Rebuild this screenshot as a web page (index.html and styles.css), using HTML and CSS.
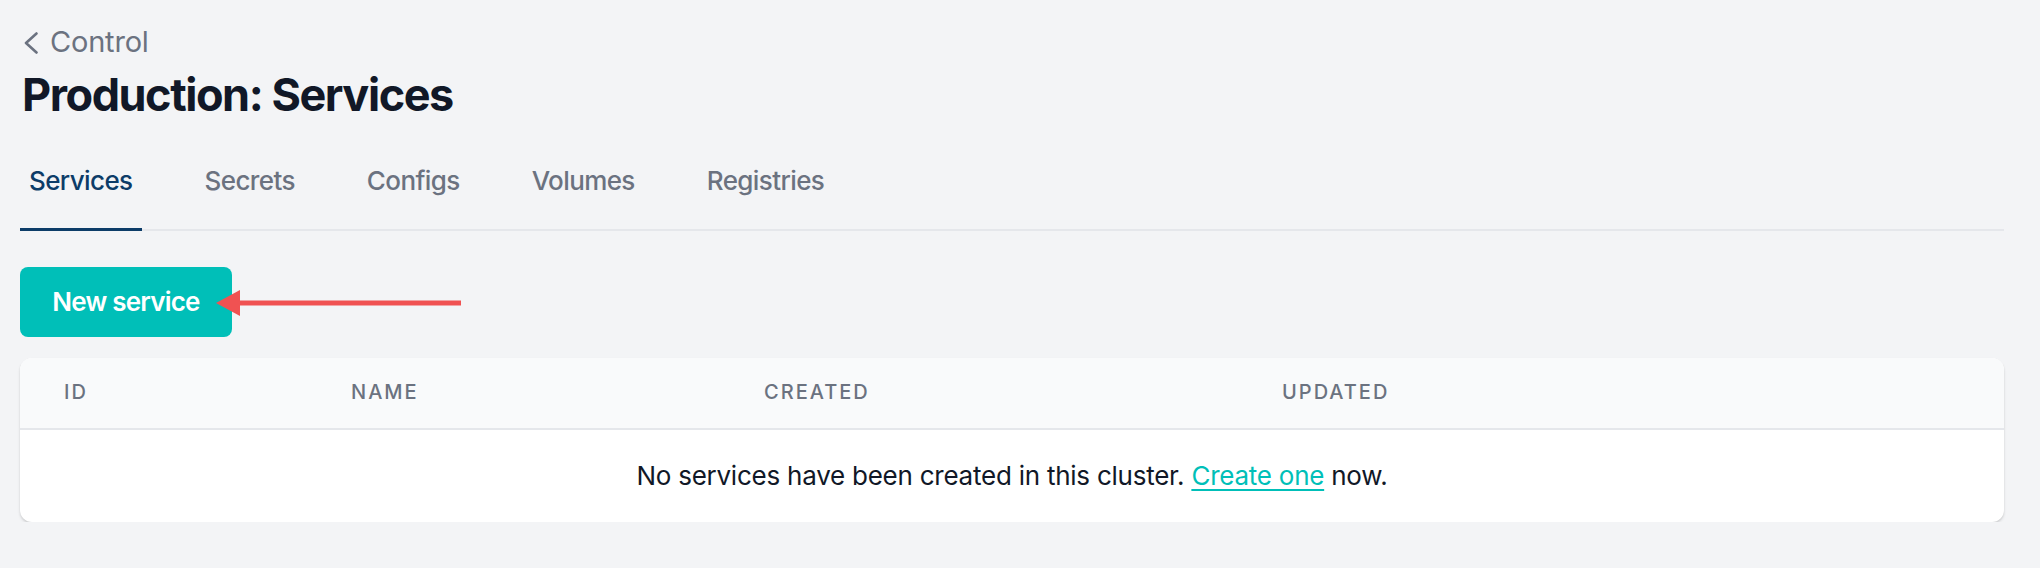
FILE: index.html
```html
<!DOCTYPE html>
<html lang="en">
<head>
<meta charset="utf-8">
<title>Production: Services</title>
<link rel="stylesheet" href="styles.css">
</head>
<body>
<div class="page">
  <a class="back" href="#">
    <svg class="chev" width="16" height="22" viewBox="0 0 16 22"><path d="M13.5 1.5 L3 11 L13.5 20.5" fill="none" stroke="#6b7280" stroke-width="2.6" stroke-linecap="round" stroke-linejoin="round"/></svg>
    <span>Control</span>
  </a>
  <h1 class="title">Production: Services</h1>
  <nav class="tabs">
    <a class="tab active" href="#">Services</a>
    <a class="tab" href="#">Secrets</a>
    <a class="tab" href="#">Configs</a>
    <a class="tab" href="#">Volumes</a>
    <a class="tab" href="#">Registries</a>
  </nav>
  <div class="actions">
    <button class="btn">New service</button>
    <svg class="arrow" width="246" height="28" viewBox="0 0 246 28"><polygon points="0,14 24,1 24,27" fill="#f05252"/><rect x="22" y="11.5" width="223" height="5" fill="#f05252"/></svg>
  </div>
  <div class="card">
    <div class="thead">
      <div class="th c-id">ID</div>
      <div class="th c-name">Name</div>
      <div class="th c-created">Created</div>
      <div class="th c-updated">Updated</div>
    </div>
    <div class="empty">No services have been created in this cluster. <a href="#">Create one</a> now.</div>
  </div>
</div>
</body>
</html>
```

FILE: styles.css
```css
* { box-sizing: border-box; }
html, body { margin: 0; padding: 0; }
body {
  background: #f3f4f6;
  font-family: Inter, "Noto Sans", "Liberation Sans", sans-serif;
  color: #111827;
}
.page {
  padding: 24px 36px 0 20px;
}
.back {
  display: flex;
  align-items: center;
  gap: 11px;
  padding-left: 3px;
  color: #6b7280;
  text-decoration: none;
  font-size: 29px;
  line-height: 36px;
  font-weight: 400;
  letter-spacing: -0.2px;
}
.chev { display: block; margin-top: 1px; }
.title {
  margin: 7px 0 0 0;
  padding-left: 2px;
  font-size: 45px;
  line-height: 56px;
  font-weight: 700;
  letter-spacing: -1.45px;
  color: #111827;
}
.tabs {
  display: flex;
  margin-top: 40px;
  border-bottom: 2px solid #e5e7eb;
}
.tab {
  display: block;
  padding: 2px 9px 31px 9px;
  margin-right: 54px;
  margin-bottom: -2px;
  font-size: 26px;
  line-height: 32px;
  font-weight: 500;
  letter-spacing: -0.6px;
  color: #6b7280;
  text-decoration: none;
  border-bottom: 3px solid transparent;
}
.tab.active {
  color: #0c3c68;
  border-bottom-color: #0c3c68;
}
.actions {
  position: relative;
  margin-top: 36px;
  height: 70px;
}
.btn {
  display: flex;
  align-items: center;
  justify-content: center;
  width: 212px;
  height: 70px;
  border: 0;
  border-radius: 8px;
  background: #00bfb8;
  color: #ffffff;
  font-family: inherit;
  font-size: 26px;
  font-weight: 600;
  letter-spacing: -0.8px;
  padding: 0 0 1px 0;
}
.arrow {
  position: absolute;
  left: 196px;
  top: 22px;
}
.card {
  margin-top: 21px;
  background: #ffffff;
  border-radius: 12px;
  overflow: hidden;
  box-shadow: 0 2px 3px rgba(0,0,0,0.12), 0 1px 2px rgba(0,0,0,0.06);
}
.thead {
  display: grid;
  grid-template-columns: 287px 413px 518px 1fr;
  height: 48px;
  padding: 22px 0 0 44px;
  background: #f9fafb;
  border-bottom: 2px solid #e5e7eb;
  box-sizing: content-box;
}
.th {
  font-size: 20px;
  line-height: 24px;
  font-weight: 500;
  text-transform: uppercase;
  letter-spacing: 2px;
  color: #6b7280;
}
.empty {
  padding: 30px 0 30px 0;
  text-align: center;
  font-size: 26px;
  line-height: 32px;
  letter-spacing: -0.24px;
  color: #111827;
}
.empty a {
  color: #00bfb8;
  text-decoration: underline;
  text-underline-offset: 4px;
}
```
